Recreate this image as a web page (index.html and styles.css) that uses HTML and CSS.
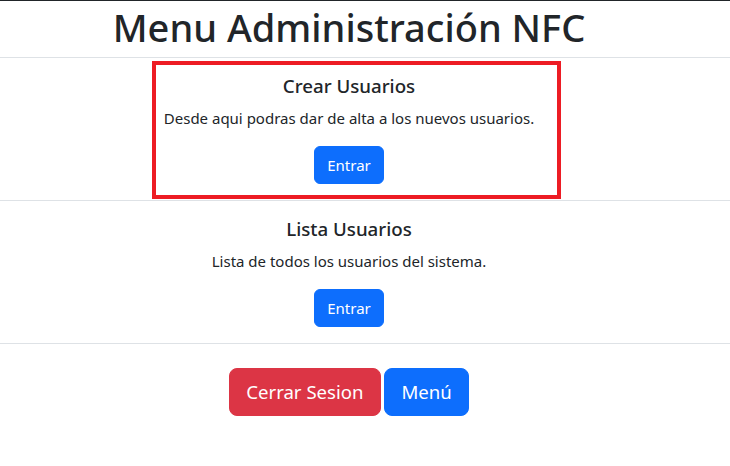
FILE: index.html
```html
<!DOCTYPE html>
<html lang="es">
<head>
<meta charset="utf-8">
<title>Menu Administración NFC</title>
<link rel="stylesheet" href="styles.css">
</head>
<body>
<h1 class="title">Menu Administración NFC</h1>
<ul class="menu-list">
  <li class="menu-item">
    <div class="highlight"></div>
    <h5 class="item-title">Crear Usuarios</h5>
    <p class="item-text">Desde aqui podras dar de alta a los nuevos usuarios.</p>
    <a class="btn btn-primary" href="#">Entrar</a>
  </li>
  <li class="menu-item">
    <h5 class="item-title">Lista Usuarios</h5>
    <p class="item-text">Lista de todos los usuarios del sistema.</p>
    <a class="btn btn-primary" href="#">Entrar</a>
  </li>
</ul>
<div class="actions">
  <a class="btn btn-lg btn-danger" href="#">Cerrar Sesion</a>
  <a class="btn btn-lg btn-primary" href="#">Menú</a>
</div>
</body>
</html>
```

FILE: styles.css
```css
* { box-sizing: border-box; }
html, body { margin: 0; padding: 0; }
body {
  font-family: "Noto Sans", "Open Sans", sans-serif;
  font-size: 15px;
  line-height: 1.5;
  color: #212529;
  background: #fff;
  border-top: 1px solid #212529;
}
.title {
  margin: 0 0 6px;
  padding: 2px 32px 0 0;
  font-size: 38px;
  font-weight: 500;
  line-height: 48px;
  text-align: center;
}
.menu-list {
  list-style: none;
  margin: 0;
  padding: 0;
  border-top: 1px solid #dee2e6;
}
.menu-item {
  position: relative;
  padding: 16px 48px 16px 16px;
  border-bottom: 1px solid #dee2e6;
  text-align: center;
}
.item-title {
  margin: 0 0 8px;
  font-size: 18.7px;
  font-weight: 500;
  line-height: 24px;
}
.item-text {
  margin: 0 0 16px;
  line-height: 24px;
}
.btn {
  display: inline-block;
  padding: 6px 12px;
  font-size: 15px;
  line-height: 24px;
  border: 1px solid transparent;
  border-radius: 6px;
  color: #fff;
  text-decoration: none;
  vertical-align: middle;
}
.btn-primary { background: #0d6efd; border-color: #0d6efd; }
.btn-danger { background: #dc3545; border-color: #dc3545; }
.btn-lg {
  padding: 8px 16px;
  font-size: 18.6px;
  line-height: 30px;
  border-radius: 8px;
}
.actions {
  margin-top: 24px;
  padding-right: 32px;
  text-align: center;
}
.highlight {
  position: absolute;
  left: 152px;
  top: 3px;
  width: 409px;
  height: 138px;
  border: 4px solid #ed1c24;
  pointer-events: none;
}
```
